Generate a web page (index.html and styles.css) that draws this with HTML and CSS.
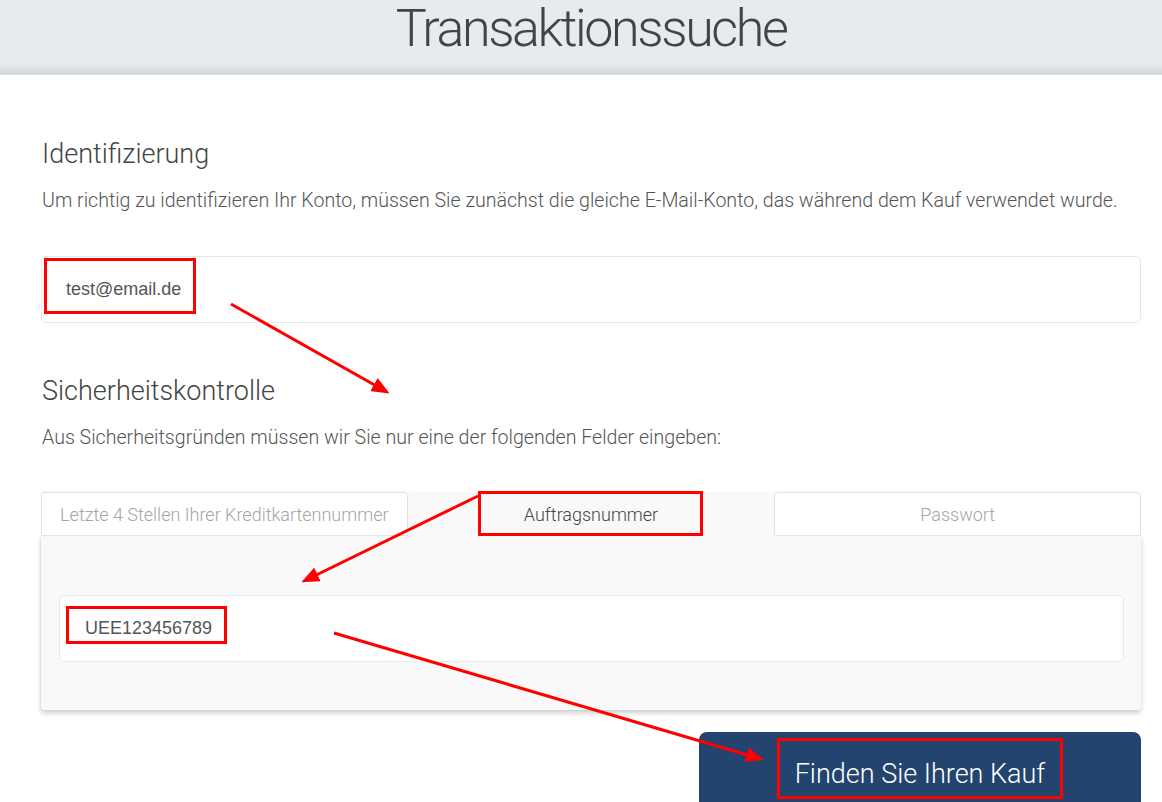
FILE: index.html
```html
<!DOCTYPE html>
<html lang="de">
<head>
  <meta charset="UTF-8">
  <title>Transaktionssuche</title>
  <link rel="stylesheet" href="styles.css">
</head>
<body>
  <div class="header">
    <h1>Transaktionssuche</h1>
  </div>

  <div class="content">
    <h2>Identifizierung</h2>
    <p class="lead">Um richtig zu identifizieren Ihr Konto, müssen Sie zunächst die gleiche E-Mail-Konto, das während dem Kauf verwendet wurde.</p>
    <div class="field">test@email.de</div>

    <h2 class="second">Sicherheitskontrolle</h2>
    <p class="lead">Aus Sicherheitsgründen müssen wir Sie nur eine der folgenden Felder eingeben:</p>

    <div class="tabs">
      <div class="tab">Letzte 4 Stellen Ihrer Kreditkartennummer</div>
      <div class="tab active">Auftragsnummer</div>
      <div class="tab">Passwort</div>
    </div>
    <div class="panel">
      <div class="field">UEE123456789</div>
    </div>

    <div class="actions">
      <button class="btn">Finden Sie Ihren Kauf</button>
    </div>
  </div>

  <!-- annotations -->
  <svg class="marks" width="1162" height="802" viewBox="0 0 1162 802">
    <defs>
      <marker id="head" markerWidth="6" markerHeight="5" refX="5" refY="2.5" orient="auto" markerUnits="strokeWidth">
        <path d="M0 0 L6 2.5 L0 5 Z" fill="#f00"/>
      </marker>
    </defs>
    <rect x="45.5" y="259.5" width="149" height="53" />
    <rect x="479.5" y="492.5" width="222" height="42" />
    <rect x="67.5" y="607.5" width="158" height="35" />
    <rect x="778.5" y="739.5" width="283" height="58" />
    <line x1="231" y1="304" x2="387" y2="392" marker-end="url(#head)" />
    <line x1="478" y1="496" x2="304" y2="581" marker-end="url(#head)" />
    <line x1="334" y1="633" x2="761" y2="759" marker-end="url(#head)" />
  </svg>
</body>
</html>
```

FILE: styles.css
```css
body { margin: 0; font-family: Roboto, "Open Sans", sans-serif; background: #fff; color: #444; overflow: hidden; }

.header { height: 75px; padding: 0 21px 0 41px; background: linear-gradient(#e6ebed 0, #e6ebed 84%, #d2d7d9 99%, #f0f2f3 100%); text-align: center; }
.header h1 { margin: 0; font-weight: 300; font-size: 52px; line-height: 58px; letter-spacing: -2.4px; color: #444; }

.content { padding: 0 21px 0 41px; }

h2 { margin: 63px 0 0 1px; font-weight: 300; font-size: 27px; line-height: 32px; color: #444; }
h2.second { margin-top: 52px; }
.lead { margin: 19px 0 0 1px; font-weight: 300; font-size: 19.6px; line-height: 24px; color: #555; }

.field { height: 65px; margin-top: 43px; border: 1px solid #e6e9ec; border-radius: 5px; background: #fff; padding-left: 24px; display: flex; align-items: center; font-family: "Liberation Sans", Arial, sans-serif; font-size: 18px; color: #555; }

.tabs { display: flex; margin-top: 42px; }
.tab { flex: 1; height: 42px; border: 1px solid #e3e3e3; border-bottom: none; border-radius: 4px 4px 0 0; background: #fff; display: flex; align-items: center; justify-content: center; font-weight: 300; font-size: 18px; color: #a5a5a5; box-shadow: 0 -1px 3px rgba(0,0,0,0.04); }
.tab:first-child { border-bottom: 1px solid #e3e3e3; }
.tab:last-child { border-bottom: 1px solid #e3e3e3; }
.tab.active { background: #f9f9f9; border-color: transparent; box-shadow: none; color: #444; }

.panel { background: #f9f9f9; padding: 59px 17px 48px 18px; box-shadow: 0 3px 5px rgba(0,0,0,0.2), -1px 0 2px rgba(0,0,0,0.06); border-radius: 0 0 3px 3px; }
.panel .field { margin-top: 0; padding-left: 25px; }

.actions { display: flex; justify-content: flex-end; margin-top: 22px; }
.btn { width: 442px; height: 90px; border: none; border-radius: 8px 8px 0 0; background: #22446e; color: #fff; font-family: Roboto, sans-serif; font-weight: 300; font-size: 27px; padding: 0 0 6px; cursor: pointer; }

.marks { position: absolute; top: 0; left: 0; pointer-events: none; }
.marks rect { fill: none; stroke: #f00; stroke-width: 3; }
.marks line { stroke: #f00; stroke-width: 3; }
```
